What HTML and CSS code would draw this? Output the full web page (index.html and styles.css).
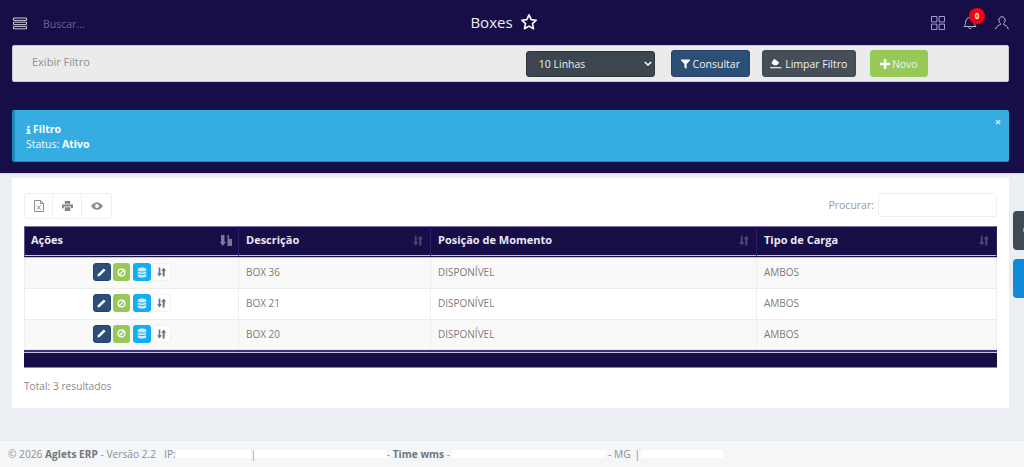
FILE: index.html
```html
<!DOCTYPE html>
<html lang="pt-BR">
<head>
<meta charset="utf-8">
<title>Boxes</title>
<link rel="stylesheet" href="styles.css">
</head>
<body>
<header class="hero">
  <div class="topbar">
    <div class="topbar-left">
      <svg class="menu-icon" viewBox="0 0 14 13" width="14" height="13"><path d="M.5 1h13v2.400H.5zM.5 5.200h13v2.400H.5zM.5 9.400h13v2.400H.5z" fill="none" stroke="#cfc9dc" stroke-width="1"/></svg>
      <span class="search">Buscar...</span>
    </div>
    <div class="title-wrap">
      <span class="title">Boxes</span>
      <svg class="star" viewBox="0 0 24 24" width="18" height="18"><path d="M12 2.600l2.900 6.200 6.700.8-5 4.600 1.400 6.700-6-3.400-6 3.400 1.400-6.700-5-4.600 6.700-.8z" fill="none" stroke="#fff" stroke-width="2.200" stroke-linejoin="round"/></svg>
    </div>
    <div class="topbar-right">
      <svg viewBox="0 0 14 14" width="14" height="14"><path d="M.5.500h5.400v5.400H.5zM8.100.5h5.400v5.400H8.100zM.5 8.100h5.400v5.400H.5zM8.100 8.100h5.400v5.400H8.100z" fill="none" stroke="#a99ccd" stroke-width="1"/></svg>
      <span class="bell">
        <svg viewBox="0 0 14 15" width="14" height="15"><path d="M1 11.500c1.200-1.200 1.500-2.200 1.600-4.400C2.700 4.400 4.500 2.500 7 2.500s4.300 1.900 4.400 4.600c.1 2.200.4 3.200 1.600 4.400zM5.500 12.500c.2 1.400 2.800 1.400 3 0" fill="none" stroke="#b9b3cb" stroke-width="1"/></svg>
        <span class="badge">0</span>
      </span>
      <svg viewBox="0 0 14 14" width="14" height="14"><path d="M7 .8c-1.900 0-3.100 1.500-3.100 3.300 0 1.600.7 2.800 1.600 3.500v.9c-1 .5-4.500 1.300-4.800 4.800M7 .8c1.900 0 3.100 1.500 3.100 3.300 0 1.600-.7 2.800-1.600 3.500v.9c1 .5 4.500 1.300 4.800 4.800" fill="none" stroke="#c5c0d3" stroke-width="1"/></svg>
    </div>
  </div>
  <div class="filter-bar">
    <span class="filter-toggle">Exibir Filtro</span>
    <div class="filter-actions">
      <div class="select">10 Linhas
        <svg viewBox="0 0 10 6" width="8" height="5"><path d="M1 1l4 4 4-4" fill="none" stroke="#fff" stroke-width="1.800"/></svg>
      </div>
      <button class="btn btn-navy"><svg viewBox="0 0 10 11" width="9" height="10"><path d="M0 .5h10v1.200L6.200 5.500V11L3.800 9V5.500L0 1.700z" fill="#fff"/></svg>Consultar</button>
      <button class="btn btn-slate"><svg viewBox="0 0 13 12" width="12" height="11"><path d="M4.500.8L10 5 7.500 8H4.200L1.500 5.500z" fill="#fff"/><path d="M0 10h12.500v1.200H0z" fill="#fff"/></svg>Limpar Filtro</button>
      <button class="btn btn-green"><svg viewBox="0 0 10 10" width="10" height="10"><path d="M3.700 0h2.600v3.700H10v2.600H6.300V10H3.700V6.300H0V3.700h3.700z" fill="#fff"/></svg>Novo</button>
    </div>
  </div>
  <div class="alert">
    <span class="alert-close">×</span>
    <div class="alert-title"><svg class="info" viewBox="0 0 5 8" width="5" height="8"><path d="M1.300 0h2.400v1.800H1.300zM.4 2.800h3.300v3.900h1V8H.3V6.700h1.200V4.100H.4z" fill="#fff"/></svg><b>Filtro</b></div>
    <div>Status: <b>Ativo</b></div>
  </div>
</header>

<main class="card">
  <div class="toolbar">
    <div class="tool-group">
      <span class="tool"><svg viewBox="0 0 10 12" width="10" height="12"><path d="M.5.500h6l3 3v8h-9zM6.500.5v3h3M3 5.500l3.500 4M6.500 5.500L3 9.500" fill="none" stroke="#8a9097" stroke-width="1"/></svg></span>
      <span class="tool"><svg viewBox="0 0 12 11" width="11" height="10"><path d="M3 0h6v3H3zM0 3.800h12V8H10V6H2v2H0zM3 7h6v4H3z" fill="#7d8389"/></svg></span>
      <span class="tool"><svg viewBox="0 0 14 9" width="12" height="8"><path d="M0 4.500C2 1.500 4.500 0 7 0s5 1.500 7 4.500C12 7.500 9.500 9 7 9S2 7.500 0 4.500z" fill="#8a9097"/><circle cx="7" cy="4.500" r="2.200" fill="#fff"/></svg></span>
    </div>
    <label class="search-box">Procurar: <span class="search-input"></span></label>
  </div>

  <table class="grid">
    <colgroup>
      <col class="c1"><col class="c2"><col class="c3"><col class="c4">
    </colgroup>
    <thead>
      <tr>
        <th>Ações<svg class="sort" viewBox="0 0 12 11" width="12" height="11"><path d="M1 0h3.500v7H6L2.700 11 0 7h1zM7.500 0H9v4h3v7H7.500z" fill="#7c7795"/></svg></th>
        <th>Descrição<svg class="sort" viewBox="0 0 12 11" width="11" height="11"><path d="M2 0h2v7h2l-3 4-3-4h2zM8 0l3 4H9.200v7H6.800V4H5z" fill="#4b4570"/></svg></th>
        <th>Posição de Momento<svg class="sort" viewBox="0 0 12 11" width="11" height="11"><path d="M2 0h2v7h2l-3 4-3-4h2zM8 0l3 4H9.200v7H6.800V4H5z" fill="#4b4570"/></svg></th>
        <th>Tipo de Carga<svg class="sort" viewBox="0 0 12 11" width="11" height="11"><path d="M2 0h2v7h2l-3 4-3-4h2zM8 0l3 4H9.200v7H6.800V4H5z" fill="#4b4570"/></svg></th>
      </tr>
    </thead>
    <tbody>
      <tr>
        <td class="actions">
          <span class="act act-edit"><svg viewBox="0 0 10 10" width="9" height="9"><path d="M7.500.5l2 2L3 9 .5 9.500 1 7z" fill="#fff"/></svg></span>
          <span class="act act-ban"><svg viewBox="0 0 10 10" width="9" height="9"><circle cx="5" cy="5" r="3.800" fill="none" stroke="#fff" stroke-width="1.400"/><path d="M2.500 7.500l5-5" stroke="#fff" stroke-width="1.400"/></svg></span>
          <span class="act act-db"><svg viewBox="0 0 10 11" width="10" height="11"><path d="M.8 2c0-2 8.400-2 8.400 0v7c0 2-8.400 2-8.400 0z" fill="#cfeeff"/><path d="M.8 4c1.500 1.300 6.900 1.300 8.400 0M.8 6.700c1.500 1.300 6.900 1.300 8.400 0" fill="none" stroke="#12a5f0" stroke-width=".9"/></svg></span>
          <span class="act act-sort"><svg viewBox="0 0 12 11" width="10" height="10"><path d="M2 0h2v7h2l-3 4-3-4h2zM8 0l3 4H9.200v7H6.800V4H5z" fill="#6c757d"/></svg></span>
        </td>
        <td>BOX 36</td><td>DISPONÍVEL</td><td>AMBOS</td>
      </tr>
      <tr>
        <td class="actions">
          <span class="act act-edit"><svg viewBox="0 0 10 10" width="9" height="9"><path d="M7.500.5l2 2L3 9 .5 9.500 1 7z" fill="#fff"/></svg></span>
          <span class="act act-ban"><svg viewBox="0 0 10 10" width="9" height="9"><circle cx="5" cy="5" r="3.800" fill="none" stroke="#fff" stroke-width="1.400"/><path d="M2.500 7.500l5-5" stroke="#fff" stroke-width="1.400"/></svg></span>
          <span class="act act-db"><svg viewBox="0 0 10 11" width="10" height="11"><path d="M.8 2c0-2 8.400-2 8.400 0v7c0 2-8.400 2-8.400 0z" fill="#cfeeff"/><path d="M.8 4c1.500 1.300 6.900 1.300 8.400 0M.8 6.700c1.500 1.300 6.900 1.300 8.400 0" fill="none" stroke="#12a5f0" stroke-width=".9"/></svg></span>
          <span class="act act-sort"><svg viewBox="0 0 12 11" width="10" height="10"><path d="M2 0h2v7h2l-3 4-3-4h2zM8 0l3 4H9.200v7H6.800V4H5z" fill="#6c757d"/></svg></span>
        </td>
        <td>BOX 21</td><td>DISPONÍVEL</td><td>AMBOS</td>
      </tr>
      <tr>
        <td class="actions">
          <span class="act act-edit"><svg viewBox="0 0 10 10" width="9" height="9"><path d="M7.500.5l2 2L3 9 .5 9.500 1 7z" fill="#fff"/></svg></span>
          <span class="act act-ban"><svg viewBox="0 0 10 10" width="9" height="9"><circle cx="5" cy="5" r="3.800" fill="none" stroke="#fff" stroke-width="1.400"/><path d="M2.500 7.500l5-5" stroke="#fff" stroke-width="1.400"/></svg></span>
          <span class="act act-db"><svg viewBox="0 0 10 11" width="10" height="11"><path d="M.8 2c0-2 8.400-2 8.400 0v7c0 2-8.400 2-8.400 0z" fill="#cfeeff"/><path d="M.8 4c1.500 1.300 6.900 1.300 8.400 0M.8 6.700c1.500 1.300 6.900 1.300 8.400 0" fill="none" stroke="#12a5f0" stroke-width=".9"/></svg></span>
          <span class="act act-sort"><svg viewBox="0 0 12 11" width="10" height="10"><path d="M2 0h2v7h2l-3 4-3-4h2zM8 0l3 4H9.200v7H6.800V4H5z" fill="#6c757d"/></svg></span>
        </td>
        <td>BOX 20</td><td>DISPONÍVEL</td><td>AMBOS</td>
      </tr>
    </tbody>
  </table>
  <div class="grid-foot"></div>
  <p class="total">Total: 3 resultados</p>
</main>

<div class="side-tabs">
  <span class="side-tab side-gray"><i class="side-arrow"></i></span>
  <span class="side-tab side-blue"></span>
</div>

<footer class="footer">
  <span>© 2026 <b>Aglets ERP</b> - Versão 2.2</span>
  <span class="ip">IP:</span><span class="mask m1"></span><span class="sep">|</span><span class="mask m2"></span>
  <span>- <b>Time wms</b> -</span><span class="mask m3"></span>
  <span>- MG</span><span class="sep sep2">|</span><span class="mask m4"></span>
</footer>
</body>
</html>
```
FILE: styles.css
```css
* { box-sizing: border-box; }
html, body { margin: 0; padding: 0; }
body {
  width: 1024px;
  height: 467px;
  overflow: hidden;
  position: relative;
  background: #ebeef3;
  font-family: "Open Sans", "Liberation Sans", sans-serif;
  font-size: 10.5px;
  color: #777;
}
.hero {
  height: 174px;
  background: #170d47;
  border-bottom: 1px solid #d8d8e4;
  padding: 0 15px 0 12px;
}
.topbar {
  height: 45px;
  display: grid;
  grid-template-columns: 1fr auto 1fr;
  align-items: center;
}
.topbar-left { display: flex; align-items: center; gap: 16px; padding-top: 2px; }
.menu-icon { display: block; margin-left: 1px; }
.search { color: #6d6690; font-size: 10.5px; }
.title-wrap { display: flex; align-items: center; gap: 7px; margin-left: -13px; margin-top: -2px; }
.title { color: #f0eff5; font-size: 15px; line-height: 20px; }
.star { display: block; }
.topbar-right {
  display: flex;
  justify-content: flex-end;
  align-items: center;
  gap: 18px;
}
.topbar-right > svg { display: block; }
.bell { position: relative; display: block; height: 15px; }
.bell svg { display: block; }
.badge {
  position: absolute;
  left: 6px;
  top: -7px;
  width: 16px;
  height: 16px;
  border-radius: 50%;
  background: #f5000c;
  color: #fff;
  font-size: 8px;
  font-weight: 700;
  line-height: 16px;
  text-align: center;
}
.filter-bar {
  height: 37px;
  background: #ebebeb;
  border: 1px solid #c9c9cf;
  border-radius: 2px;
  display: flex;
  align-items: center;
  padding: 0 0 0 19px;
}
.filter-toggle { color: #8f8f96; font-size: 11px; margin-top: -4px; }
.filter-actions { margin-left: 436px; display: flex; align-items: center; }
.select {
  width: 129px;
  height: 26px;
  background: #3d464e;
  border: 1px solid #30373e;
  border-radius: 3px;
  color: #eceef0;
  font-size: 10.5px;
  padding: 0 0 0 12px;
  display: flex;
  align-items: center;
  justify-content: space-between;
  margin-right: 16px;
}
.select svg { margin-right: 2px; }
.btn {
  height: 27px;
  border: 1px solid transparent;
  border-radius: 3px;
  color: #eef1f4;
  font-family: inherit;
  font-size: 10.5px;
  display: inline-flex;
  align-items: center;
  justify-content: center;
  gap: 3px;
  padding: 0;
}
.btn-navy { width: 79px; background: #2c5075; border-color: #2c3f73; margin-right: 12px; }
.btn-slate { width: 94px; background: #464f58; border-color: #3f4850; margin-right: 14px; }
.btn-green { width: 58px; background: #96c958; border-color: #96c958; gap: 2px; }
.alert {
  margin-top: 28px;
  height: 52px;
  position: relative;
  background: #35ace2;
  border-left: 3px solid #1b8bbf;
  border-bottom: 1px solid #2488b8;
  border-radius: 2px;
  padding: 12px 11px;
  color: #f5fbfe;
  font-size: 10.5px;
  line-height: 15px;
}
.alert b { color: #fff; font-weight: 700; }
.alert-title { display: flex; align-items: center; gap: 2px; }
.info { display: block; }
.alert-close {
  position: absolute;
  right: 8px;
  top: 4px;
  color: #dff1fa;
  font-size: 11px;
  font-weight: 700;
}
.card {
  position: relative;
  margin: 4px 15px 0 12px;
  height: 230px;
  background: #fff;
  padding: 15px 12px 0;
}
.toolbar { display: flex; justify-content: space-between; align-items: flex-start; height: 33px; }
.tool-group {
  display: flex;
  height: 26px;
  border: 1px solid #edeff1;
  border-radius: 3px;
}
.tool {
  width: 29px;
  display: flex;
  align-items: center;
  justify-content: center;
  border-right: 1px solid #edeff1;
}
.tool:first-child { width: 28px; }
.tool:last-child { border-right: 0; }
.search-box { display: flex; align-items: center; gap: 4px; color: #999; font-size: 10.5px; }
.search-input {
  width: 119px;
  height: 24px;
  border: 1px solid #eceef0;
  border-radius: 3px;
  background: #fff;
}
.grid {
  width: 973px;
  border-collapse: separate;
  border-spacing: 0;
  table-layout: fixed;
}
.c1 { width: 215px; }
.c2 { width: 192px; }
.c3 { width: 326px; }
.c4 { width: 240px; }
.grid th {
  height: 32px;
  position: relative;
  background: #170d47;
  color: #ece9f6;
  font-size: 11px;
  font-weight: 700;
  text-align: left;
  padding: 0 7px 3px;
  border-top: 1px solid #7a72a6;
  border-bottom: 3px double #c8c4dc;
  border-right: 1px solid #2a1f68;
}
.grid th:first-child { border-left: 1px solid #5c5391; padding-left: 6px; }
.sort { position: absolute; right: 6px; top: 8px; }
.grid td {
  height: 31px;
  padding: 0 7px 2px;
  border-right: 1px solid #eeeeee;
  border-bottom: 1px solid #ececec;
  color: #7b7b7b;
  font-size: 10px;
}
.grid td:first-child { border-left: 1px solid #eeeeee; }
.grid tbody tr:nth-child(odd) td { background: #f9f9f9; }
.grid tbody tr:last-child td { height: 30px; }
td.actions { text-align: center; font-size: 0; }
.act {
  display: inline-flex;
  align-items: center;
  justify-content: center;
  width: 18px;
  height: 18px;
  margin-right: 2px;
  border-radius: 3px;
  vertical-align: middle;
}
.act-edit { background: #2c4f78; border: 1px solid #2c3f73; }
.act-ban { background: #96c958; width: 17px; margin-right: 3px; }
.act-db { background: #12aef5; }
.act-sort { background: #fff; border: 1px solid #f0f0f0; margin-right: 0; }
.grid-foot {
  height: 18px;
  background: #170d47;
  border-top: 2px solid #3b2f84;
  border-bottom: 1px solid #8a84ad;
  box-shadow: inset 0 1px 0 #c8c4dc;
}
.total { margin: 11px 0 0; color: #8a8a8a; font-size: 10.2px; line-height: 14px; }
.side-tabs {
  position: absolute;
  right: 0;
  top: 211px;
  display: flex;
  flex-direction: column;
  gap: 9px;
}
.side-tab { display: block; position: relative; width: 11px; height: 39px; border-radius: 4px 0 0 4px; }
.side-gray { background: #3f4a52; }
.side-blue { background: #0f8bd9; }
.side-arrow {
  position: absolute;
  left: 10px;
  top: 17px;
  width: 1px;
  height: 4px;
  background: #8fa0ac;
}
.footer {
  position: absolute;
  left: 0;
  right: 0;
  bottom: 0;
  height: 27px;
  background: #f4f6f8;
  border-top: 1px solid #e9ebee;
  padding: 0 0 0 8px;
  display: flex;
  align-items: center;
  color: #8a8f95;
  font-size: 10.2px;
  white-space: pre;
}
.footer b { color: #70767c; }
.ip { margin-left: 8px; }
.mask { display: block; height: 8px; background: #fff; }
.m1 { width: 75px; }
.sep { width: 3px; color: #8a8f95; }
.m2 { width: 133px; }
.m3 { width: 154px; margin: 0 2px; }
.sep2 { margin-left: 4px; }
.m4 { width: 82px; margin-left: 3px; }
```
